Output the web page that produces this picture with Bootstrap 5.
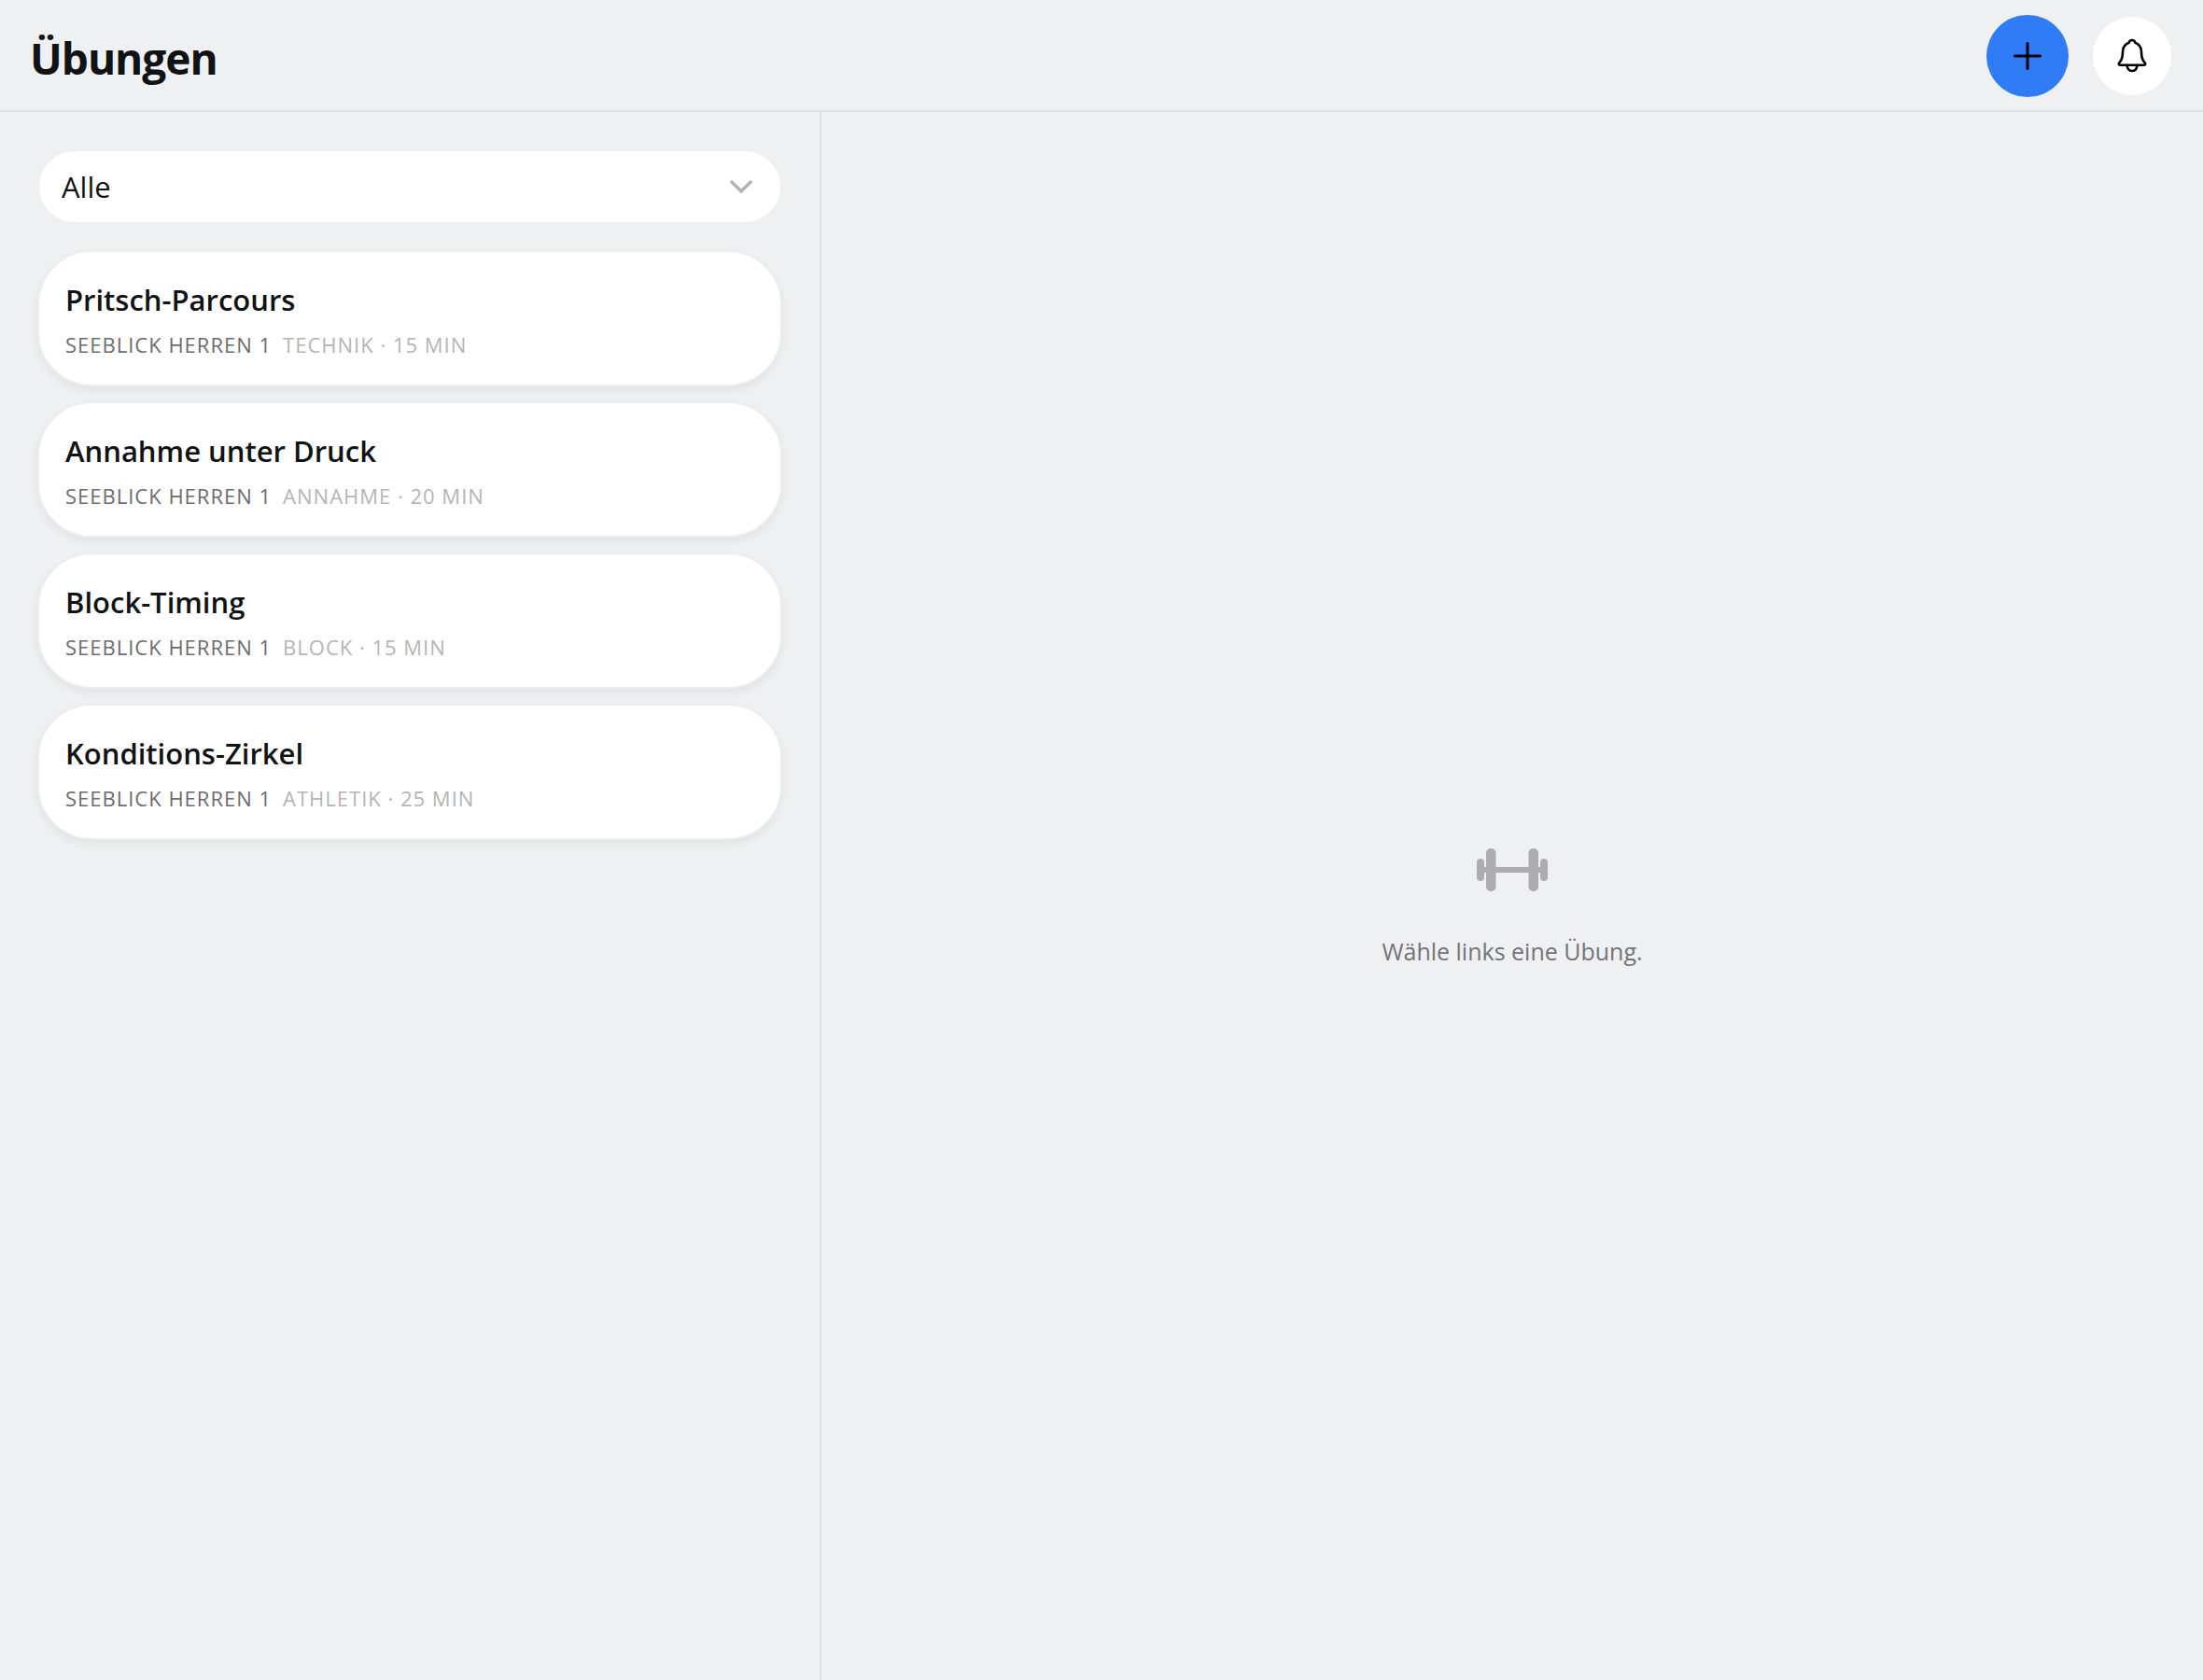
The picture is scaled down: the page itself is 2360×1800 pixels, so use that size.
<!DOCTYPE html>
<html lang="de">
<head>
<meta charset="utf-8">
<meta name="viewport" content="width=device-width, initial-scale=1">
<title>Übungen</title>
<link href="https://cdn.jsdelivr.net/npm/bootstrap@5.3.0/dist/css/bootstrap.min.css" rel="stylesheet">
<style>
body { background: #eef0f2; color: #111214; font-family: "Segoe UI", "Open Sans", "Noto Sans", sans-serif; }
.topbar { padding: 16px 34px 14px 32px; border-bottom: 2px solid #dddfe1; }
.page-title { padding-top: 4px; font-size: 46px; line-height: 60px; font-weight: 700; letter-spacing: -1px; }
.header-actions { gap: 26px; }
.round-btn { width: 84px; height: 84px; background: #fff; border: 0; color: #000; }
.round-btn-add { width: 88px; height: 88px; background: #2f7cf6; }
.side-panel { width: 880px; padding: 40px; border-right: 2px solid #dddfe1; }
.filter-select { height: 80px; padding: 0 56px 0 24px; border: 2px solid #eef0f2; border-radius: 40px; font-size: 31px; color: #111214; background-color: #fff;
  background-image: url("data:image/svg+xml,%3Csvg xmlns='http://www.w3.org/2000/svg' viewBox='0 0 24 14' fill='none' stroke='%23b3b3b3' stroke-width='3.400' stroke-linecap='round' stroke-linejoin='round'%3E%3Cpath d='M2 2l10 10L22 2'/%3E%3C/svg%3E");
  background-size: 24px 14px; background-position: right 30px center; }
.exercise-list { gap: 16px; margin-top: 28px; }
.exercise { min-height: 146px; padding: 28px 28px 26px; border: 2px solid #ebedee; border-radius: 58px; background: #fff; text-decoration: none; box-shadow: 0 4px 10px rgba(0, 0, 0, .06); }
.exercise-name { font-size: 31px; line-height: 44px; font-weight: 600; color: #111214; }
.exercise-meta { font-size: 22px; line-height: 32px; letter-spacing: 1px; gap: 12px; margin-top: 10px; color: #b5b5b5; }
.exercise-team { color: #6c6c6c; font-weight: 500; }
.empty-state { gap: 46px; padding-top: 26px; color: #737378; font-size: 25px; line-height: 36px; }
</style>
</head>
<body>
<div class="d-flex flex-column min-vh-100">
  <header class="topbar d-flex align-items-center justify-content-between">
    <h1 class="page-title mb-0">Übungen</h1>
    <div class="header-actions d-flex align-items-center">
      <button type="button" class="round-btn round-btn-add rounded-circle d-flex align-items-center justify-content-center p-0" aria-label="Neue Übung">
        <svg width="30" height="30" viewBox="0 0 30 30" fill="none" stroke="currentColor" stroke-width="3" stroke-linecap="round"><path d="M15 1.500v27M1.500 15h27"/></svg>
      </button>
      <button type="button" class="round-btn rounded-circle d-flex align-items-center justify-content-center p-0" aria-label="Mitteilungen">
        <svg width="32" height="38" viewBox="0 0 32 38" fill="none" stroke="currentColor" stroke-width="2.600" stroke-linejoin="round" stroke-linecap="round"><path d="M16 2c-1.800 0-3 1-3.400 2.800C8.500 6.500 6.300 9.500 6.100 13.500c-.3 6.500-.6 9-3.500 12.400-1.300 1.600-.8 2.900 1 2.900h24.800c1.800 0 2.300-1.300 1-2.900-2.900-3.400-3.200-5.900-3.500-12.400-.2-4-2.400-7-6.500-8.700C19 3 17.800 2 16 2z"/><path d="M10.600 29c.3 3.900 2.400 6 5.400 6s5.100-2.100 5.400-6"/></svg>
      </button>
    </div>
  </header>
  <div class="d-flex flex-grow-1">
    <aside class="side-panel flex-shrink-0">
      <select class="form-select filter-select" aria-label="Team">
        <option selected>Alle</option>
        <option>Seeblick Herren 1</option>
      </select>
      <nav class="exercise-list d-flex flex-column" aria-label="Übungen">
        <a class="exercise d-flex flex-column justify-content-center" href="#">
          <span class="exercise-name">Pritsch-Parcours</span>
          <span class="exercise-meta d-flex text-uppercase"><span class="exercise-team">Seeblick Herren 1</span><span>Technik · 15 min</span></span>
        </a>
        <a class="exercise d-flex flex-column justify-content-center" href="#">
          <span class="exercise-name">Annahme unter Druck</span>
          <span class="exercise-meta d-flex text-uppercase"><span class="exercise-team">Seeblick Herren 1</span><span>Annahme · 20 min</span></span>
        </a>
        <a class="exercise d-flex flex-column justify-content-center" href="#">
          <span class="exercise-name">Block-Timing</span>
          <span class="exercise-meta d-flex text-uppercase"><span class="exercise-team">Seeblick Herren 1</span><span>Block · 15 min</span></span>
        </a>
        <a class="exercise d-flex flex-column justify-content-center" href="#">
          <span class="exercise-name">Konditions-Zirkel</span>
          <span class="exercise-meta d-flex text-uppercase"><span class="exercise-team">Seeblick Herren 1</span><span>Athletik · 25 min</span></span>
        </a>
      </nav>
    </aside>
    <main class="empty-state flex-grow-1 d-flex flex-column align-items-center justify-content-center">
      <svg width="76" height="46" viewBox="0 0 76 46" fill="#adadaf" aria-hidden="true"><rect x="0" y="11" width="8" height="24" rx="4"/><rect x="10" y="0" width="10.500" height="46" rx="5"/><rect x="55.500" y="0" width="10.500" height="46" rx="5"/><rect x="68" y="11" width="8" height="24" rx="4"/><rect x="6" y="20" width="64" height="6"/></svg>
      <p class="mb-0">Wähle links eine Übung.</p>
    </main>
  </div>
</div>
<script src="https://cdn.jsdelivr.net/npm/bootstrap@5.3.0/dist/js/bootstrap.bundle.min.js"></script>
</body>
</html>
